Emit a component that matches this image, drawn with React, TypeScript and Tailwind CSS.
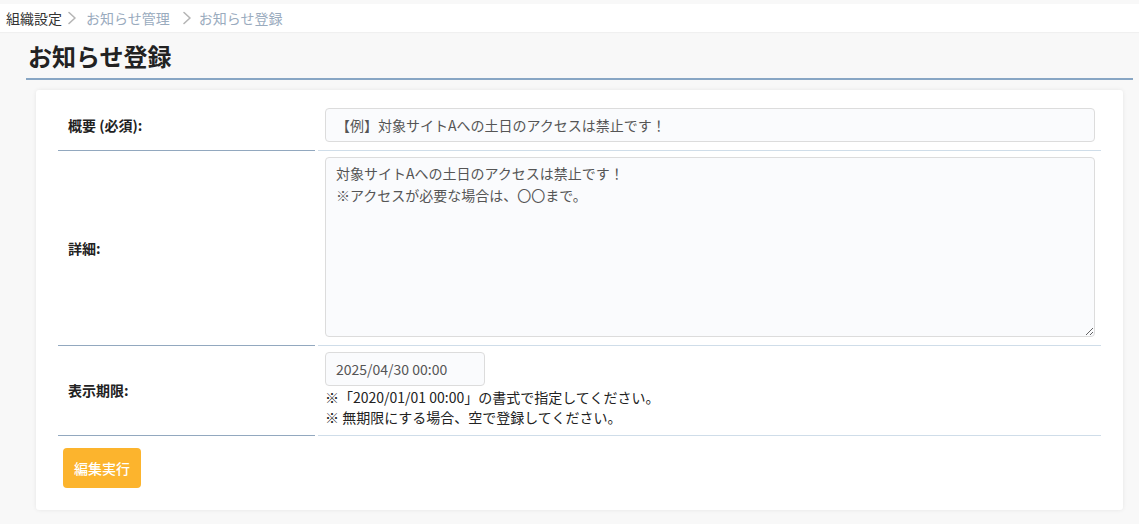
import React from "react";

const Chevron = () => (
  <svg width="10" height="14" viewBox="0 0 10 14" className="shrink-0">
    <path d="M2 1.5 L8 7 L2 12.5" fill="none" stroke="#b5b5b5" strokeWidth="1.6" strokeLinecap="round" strokeLinejoin="round" />
  </svg>
);

export default function App() {
  const font = { fontFamily: '"Noto Sans CJK JP", "Noto Sans", sans-serif' };
  return (
    <div className="min-h-[524px] w-full bg-[#f8f8f8] pt-[4px] pb-[14px]" style={font}>
      {/* breadcrumb */}
      <div className="flex h-[28px] items-center bg-white pl-[6px] text-[14px] shadow-[0_1px_1px_rgba(0,0,0,0.03)]">
        <span className="text-[#333]">組織設定</span>
        <span className="ml-[5px] mr-[9px] flex items-center"><Chevron /></span>
        <span className="text-[#9aabbe]">お知らせ管理</span>
        <span className="ml-[12px] mr-[7px] flex items-center"><Chevron /></span>
        <span className="text-[#9aabbe]">お知らせ登録</span>
      </div>

      {/* heading */}
      <div className="ml-[26px] mr-[6px] border-b-2 border-[#88a6c4] pl-[2px] pt-[6px] pb-[4px]">
        <h1 className="text-[24px] font-bold leading-[36px] text-[#222]">お知らせ登録</h1>
      </div>

      {/* card */}
      <div className="ml-[36px] mr-[16px] mt-[10px] rounded-[3px] bg-white px-[22px] pt-[10px] pb-[22px] shadow-[0_0_4px_rgba(0,0,0,0.08)]">
        <div className="grid grid-cols-[257px_1fr] gap-x-[3px]">
          {/* row 1 */}
          <div className="flex items-center border-b border-[#92a8bf] pl-[10px] text-[14px] font-bold text-[#222]">
            概要 (必須):
          </div>
          <div className="border-b border-[#cfdde9] pt-[8px] pb-[8px] pl-[7px] pr-[6px]">
            <div className="flex h-[34px] items-center rounded-[4px] border border-[#dcdcdc] bg-[#fafbfd] px-[10px] text-[14px] text-[#555]">
              【例】対象サイトAへの土日のアクセスは禁止です！
            </div>
          </div>

          {/* row 2 */}
          <div className="flex items-center border-b border-[#92a8bf] pl-[10px] text-[14px] font-bold text-[#222]">
            詳細:
          </div>
          <div className="border-b border-[#cfdde9] pt-[6px] pb-[8px] pl-[7px] pr-[6px]">
            <textarea
              readOnly
              className="block h-[180px] w-full resize-y rounded-[4px] border border-[#dcdcdc] bg-[#fafbfd] px-[10px] py-[4px] text-[14px] leading-[22px] text-[#555] outline-none"
              style={font}
              defaultValue={"対象サイトAへの土日のアクセスは禁止です！\n※アクセスが必要な場合は、〇〇まで。"}
            />
          </div>

          {/* row 3 */}
          <div className="flex items-center border-b border-[#92a8bf] pl-[10px] text-[14px] font-bold text-[#222]">
            表示期限:
          </div>
          <div className="border-b border-[#cfdde9] pt-[6px] pb-[8px] pl-[7px] pr-[6px]">
            <div className="flex h-[34px] w-[160px] items-center rounded-[4px] border border-[#dcdcdc] bg-[#fafbfd] px-[10px] text-[14px] text-[#555]">
              2025/04/30 00:00
            </div>
            <div className="mt-[1px] text-[14px] leading-[20px] text-[#222]">
              <p>※「2020/01/01 00:00」の書式で指定してください。</p>
              <p>※ 無期限にする場合、空で登録してください。</p>
            </div>
          </div>
        </div>

        <div className="mt-[12px] pl-[5px]">
          <button className="flex h-[40px] w-[78px] items-center justify-center rounded-[4px] bg-[#fcb42d] text-[14px] font-medium text-white">
            編集実行
          </button>
        </div>
      </div>
    </div>
  );
}
